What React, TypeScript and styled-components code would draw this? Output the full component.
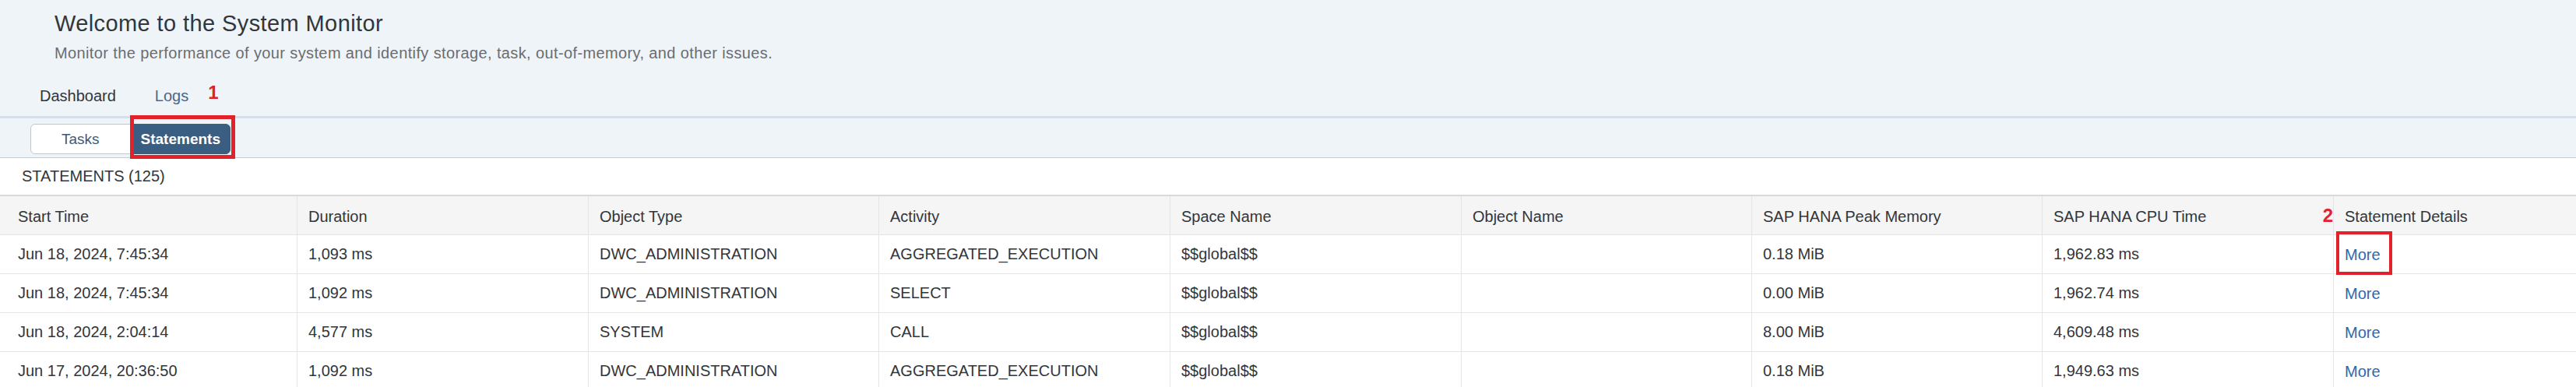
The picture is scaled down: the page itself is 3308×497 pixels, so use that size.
import styled, { createGlobalStyle } from "styled-components"

type Row = {
  start: string
  duration: string
  objectType: string
  activity: string
  space: string
  objectName: string
  peak: string
  cpu: string
}

const columns = [
  'Start Time',
  'Duration',
  'Object Type',
  'Activity',
  'Space Name',
  'Object Name',
  'SAP HANA Peak Memory',
  'SAP HANA CPU Time',
  'Statement Details',
]

const rows: Row[] = [
  { start: 'Jun 18, 2024, 7:45:34', duration: '1,093 ms', objectType: 'DWC_ADMINISTRATION', activity: 'AGGREGATED_EXECUTION', space: '$$global$$', objectName: '', peak: '0.18 MiB', cpu: '1,962.83 ms' },
  { start: 'Jun 18, 2024, 7:45:34', duration: '1,092 ms', objectType: 'DWC_ADMINISTRATION', activity: 'SELECT', space: '$$global$$', objectName: '', peak: '0.00 MiB', cpu: '1,962.74 ms' },
  { start: 'Jun 18, 2024, 2:04:14', duration: '4,577 ms', objectType: 'SYSTEM', activity: 'CALL', space: '$$global$$', objectName: '', peak: '8.00 MiB', cpu: '4,609.48 ms' },
  { start: 'Jun 17, 2024, 20:36:50', duration: '1,092 ms', objectType: 'DWC_ADMINISTRATION', activity: 'AGGREGATED_EXECUTION', space: '$$global$$', objectName: '', peak: '0.18 MiB', cpu: '1,949.63 ms' },
]

function App() {
  return <>
    <GlobalStyle />
    <Page>
      <Header>
        <Title>Welcome to the System Monitor</Title>
        <Subtitle>Monitor the performance of your system and identify storage, task, out-of-memory, and other issues.</Subtitle>
      </Header>
      <Nav>
        <NavItem>Dashboard</NavItem>
        <NavItem $active>
          Logs
          <Marker $pos="nav">1</Marker>
        </NavItem>
      </Nav>
      <TabBar>
        <Segmented>
          <Segment>Tasks</Segment>
          <Segment $selected>
            Statements
            <Highlight $pos="tab" />
          </Segment>
        </Segmented>
      </TabBar>
      <SectionTitle>STATEMENTS (125)</SectionTitle>
      <Table>
        {columns.map((c, i) => (
          <HeadCell key={c} $first={i === 0} $last={i === columns.length - 1}>
            {i === columns.length - 1 && <Marker $pos="head">2</Marker>}
            {c}
          </HeadCell>
        ))}
        {rows.map((r, ri) => {
          const values = [r.start, r.duration, r.objectType, r.activity, r.space, r.objectName, r.peak, r.cpu]
          return [
            ...values.map((v, i) => (
              <Cell key={ri + '-' + i} $first={i === 0}>{v}</Cell>
            )),
            <Cell key={ri + '-more'} $last>
              <MoreLink href="#">
                More
                {ri === 0 && <Highlight $pos="link" />}
              </MoreLink>
            </Cell>,
          ]
        })}
      </Table>
    </Page>
  </>
}

export default App

const GlobalStyle = createGlobalStyle`
  html, body {
    margin: 0;
    padding: 0;
    overflow: hidden;
    background: #fff;
  }
  body {
    font-family: "Liberation Sans", Arial, sans-serif;
    color: #32363a;
  }
`

const Page = styled.div`
  width: 3308px;
  min-height: 497px;
`

const Header = styled.div`
  background: #eff4f9;
  padding: 13px 0 0 70px;
  display: flex;
  flex-direction: column;
  gap: 8px;
  height: 98px;
  box-sizing: border-box;
`

const Title = styled.div`
  font-size: 29px;
  line-height: 35px;
  letter-spacing: 0.4px;
  color: #32363a;
`

const Subtitle = styled.div`
  font-size: 20px;
  line-height: 24px;
  letter-spacing: 0.38px;
  color: #6a6d70;
`

const Nav = styled.div`
  background: #eff4f9;
  display: flex;
  gap: 50px;
  padding: 13px 0 0 51px;
  height: 54px;
  box-sizing: border-box;
  border-bottom: 3px solid #d3e0eb;
`

const NavItem = styled.div<{ $active?: boolean }>`
  position: relative;
  font-size: 20px;
  line-height: 24px;
  color: ${p => p.$active ? '#4b6888' : '#32363a'};
`

const Marker = styled.span<{ $pos: 'nav' | 'head' }>`
  position: absolute;
  font-size: 24px;
  font-weight: 700;
  line-height: 24px;
  color: #e3212b;
  ${p => p.$pos === 'nav'
    ? 'left: calc(100% + 25px); top: -4px;'
    : 'right: calc(100% + 1px); top: 13px;'}
`

const TabBar = styled.div`
  background: #eff4f9;
  height: 51px;
  box-sizing: border-box;
  padding: 7px 0 0 39px;
  border-bottom: 1px solid #c8cdd3;
`

const Segmented = styled.div`
  display: flex;
  width: 257px;
  height: 39px;
`

const Segment = styled.div<{ $selected?: boolean }>`
  position: relative;
  flex: 1;
  display: flex;
  align-items: center;
  justify-content: center;
  box-sizing: border-box;
  font-size: 19px;
  font-weight: ${p => p.$selected ? 700 : 400};
  color: ${p => p.$selected ? '#fff' : '#3f5a78'};
  background: ${p => p.$selected ? '#3a5e82' : '#fff'};
  border: 1px solid ${p => p.$selected ? '#3a5e82' : '#bfc7d0'};
  border-radius: ${p => p.$selected ? '0 6px 6px 0' : '6px 0 0 6px'};
`

const Highlight = styled.span<{ $pos: 'tab' | 'link' }>`
  position: absolute;
  border: 5px solid #e3212b;
  pointer-events: none;
  ${p => p.$pos === 'tab'
    ? 'top: -12px; left: -2px; right: -7px; bottom: -7px;'
    : 'top: -18px; left: -11px; right: -15px; bottom: -14px; border-width: 4px;'}
`

const SectionTitle = styled.div`
  height: 49px;
  box-sizing: border-box;
  padding: 11px 0 0 28px;
  font-size: 20px;
  line-height: 24px;
  color: #32363a;
  border-bottom: 2px solid #d9d9d9;
`

const Table = styled.div`
  display: grid;
  grid-template-columns: 382px 374px 373px 374px 374px 373px 373px 374px 1fr;
  font-size: 20px;
`

const HeadCell = styled.div<{ $first?: boolean; $last?: boolean }>`
  position: relative;
  height: 50px;
  box-sizing: border-box;
  display: flex;
  align-items: center;
  padding: 3px 0 0 ${p => p.$first ? 23 : 14}px;
  background: #f5f5f5;
  border-bottom: 1px solid #e5e5e5;
  border-right: ${p => p.$last ? 'none' : '1px solid #e5e5e5'};
  white-space: nowrap;
`

const Cell = styled.div<{ $first?: boolean; $last?: boolean }>`
  height: 50px;
  box-sizing: border-box;
  display: flex;
  align-items: center;
  padding-left: ${p => p.$first ? 23 : 14}px;
  border-bottom: 1px solid #e5e5e5;
  border-right: ${p => p.$last ? 'none' : '1px solid #e5e5e5'};
  white-space: nowrap;
`

const MoreLink = styled.a`
  position: relative;
  color: #2a6ab0;
  text-decoration: none;
  line-height: 24px;
`
